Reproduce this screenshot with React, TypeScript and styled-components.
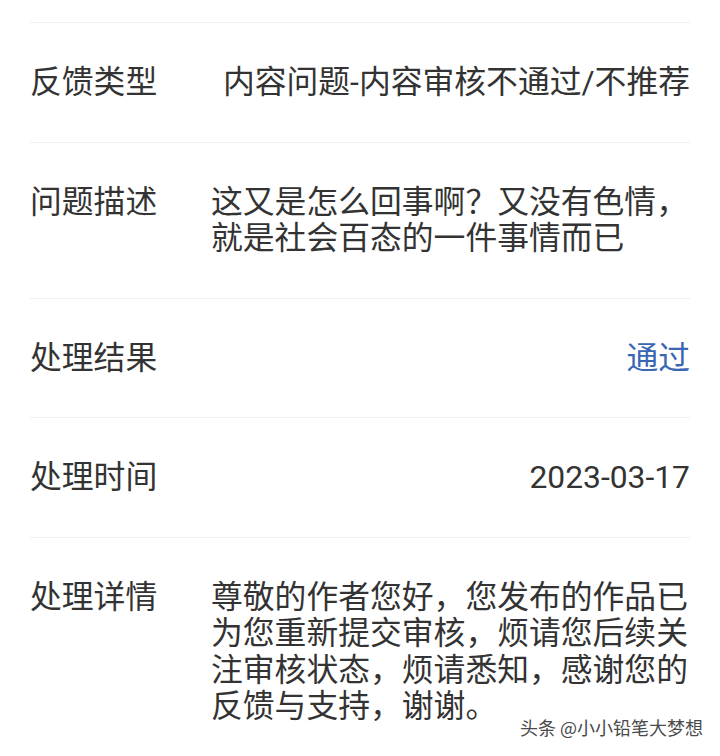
import React from "react";
import styled, { createGlobalStyle } from "styled-components";

const Global = createGlobalStyle`
  html, body {
    margin: 0;
    padding: 0;
    background: #ffffff;
  }
  body {
    font-family: Roboto, "Noto Sans CJK SC", "Noto Sans", sans-serif;
    -webkit-font-smoothing: antialiased;
  }
`;

const Page = styled.div`
  position: relative;
  width: 720px;
  height: 756px;
  overflow: hidden;
  background: #ffffff;
`;

const List = styled.div`
  display: flex;
  flex-direction: column;
  padding-top: 22px;
`;

const Row = styled.div<{ $first?: boolean }>`
  display: flex;
  align-items: flex-start;
  margin: 0 30px;
  padding: 41px 0 41px;
  border-top: ${(p) => (p.$first ? "1px solid #f1f1f1" : "none")};
  border-bottom: 1px solid #f1f1f1;
`;

const Label = styled.div`
  flex: 0 0 181px;
  font-size: 31.8px;
  line-height: 36.5px;
  color: #333333;
  white-space: nowrap;
`;

const ValueWrap = styled.div`
  flex: 1;
  display: flex;
  justify-content: flex-end;
  min-width: 0;
`;

const Value = styled.span<{ $tone?: "link" }>`
  display: inline-block;
  text-align: left;
  font-size: 31.8px;
  line-height: 36.5px;
  color: ${(p) => (p.$tone === "link" ? "#3a66b3" : "#333333")};
`;

const Watermark = styled.div`
  position: absolute;
  right: 17px;
  bottom: 18px;
  font-family: "Noto Sans CJK SC", sans-serif;
  font-size: 18px;
  line-height: 22px;
  color: #4a4a4a;
  text-shadow: 0 0 2px #ffffff, 1px 1px 1px rgba(255, 255, 255, 0.9);
  white-space: nowrap;
`;

type Item = { label: string; value: string; tone?: "link" };

const items: Item[] = [
  { label: "反馈类型", value: "内容问题-内容审核不通过/不推荐" },
  { label: "问题描述", value: "这又是怎么回事啊？又没有色情，就是社会百态的一件事情而已" },
  { label: "处理结果", value: "通过", tone: "link" },
  { label: "处理时间", value: "2023-03-17" },
  {
    label: "处理详情",
    value:
      "尊敬的作者您好，您发布的作品已为您重新提交审核，烦请您后续关注审核状态，烦请悉知，感谢您的反馈与支持，谢谢。",
  },
];

export default function App() {
  return (
    <>
      <Global />
      <Page>
        <List>
          {items.map((it, i) => (
            <Row key={it.label} $first={i === 0}>
              <Label>{it.label}</Label>
              <ValueWrap>
                <Value $tone={it.tone}>{it.value}</Value>
              </ValueWrap>
            </Row>
          ))}
        </List>
        <Watermark>头条 @小小铅笔大梦想</Watermark>
      </Page>
    </>
  );
}
